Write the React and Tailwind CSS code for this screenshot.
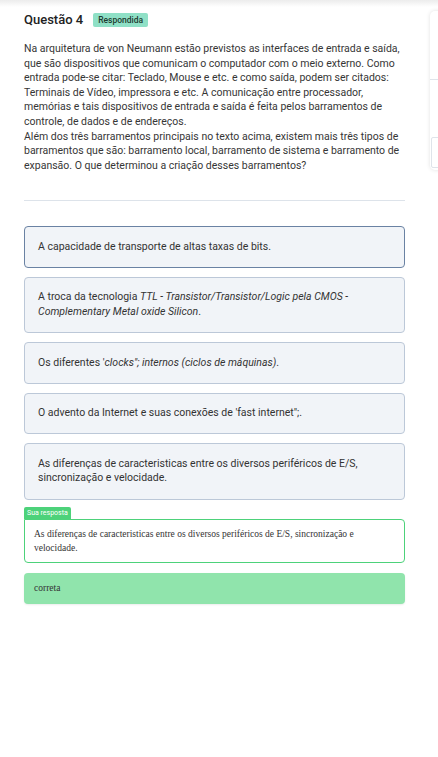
export default function App() {
  const options = [
    { key: 1, content: <>A capacidade de transporte de altas taxas de bits.</>, active: true },
    {
      key: 2,
      content: (
        <>
          A troca da tecnologia <em>TTL - Transistor/Transistor/Logic pela CMOS - Complementary Metal oxide Silicon</em>.
        </>
      ),
    },
    {
      key: 3,
      content: (
        <>
          Os diferentes '<em>clocks"; internos (ciclos de máquinas)</em>.
        </>
      ),
    },
    { key: 4, content: <>O advento da Internet e suas conexões de 'fast internet";.</> },
    {
      key: 5,
      content: <>As diferenças de caracteristicas entre os diversos periféricos de E/S, sincronização e velocidade.</>,
    },
  ];

  return (
    <div className="min-h-[757px] w-[438px] overflow-hidden bg-white font-['Roboto',sans-serif] text-[#333]">
      <div className="h-[7px] bg-gradient-to-b from-[#ececec] to-white" />
      <div className="flex">
        <div className="ml-6 w-[381px] shrink-0">
          <div className="mt-[5px] flex items-center gap-[10px]">
            <h2 className="text-[13px] font-medium leading-[16px] text-[#222]">Questão 4</h2>
            <span className="rounded-[2px] bg-[#8fe0c6] px-[5px] py-[1.5px] text-[8.5px] font-medium leading-[11px] text-[#1d3b30]">
              Respondida
            </span>
          </div>
          <div className="mt-[14px] text-[10.5px] leading-[14.6px] text-[#363636]">
            <p>
              Na arquitetura de von Neumann estão previstos as interfaces de entrada e saída, que são dispositivos que comunicam o computador com o meio externo. Como entrada pode-se citar: Teclado, Mouse e etc. e como saída, podem ser citados: Terminais de Vídeo, impressora e etc. A comunicação entre processador, memórias e tais dispositivos de entrada e saída é feita pelos barramentos de controle, de dados e de endereços.
            </p>
            <p>
              Além dos três barramentos principais no texto acima, existem mais três tipos de barramentos que são: barramento local, barramento de sistema e barramento de expansão. O que determinou a criação desses barramentos?
            </p>
          </div>
          <div className="mt-[27px] h-px bg-[#dde3ea]" />
          <div className="mt-[25px] flex flex-col gap-[9px]">
            {options.map((o) => (
              <div
                key={o.key}
                className={
                  o.active
                    ? "rounded-[4px] border border-[#6a82a3] bg-[#f1f4f8] px-[13px] py-[12.5px] text-[10.5px] leading-[14.6px] text-[#333]"
                    : "rounded-[4px] border border-[#bcc8d8] bg-[#f1f4f8] px-[13px] py-[12.5px] text-[10.5px] leading-[14.6px] text-[#333]"
                }
              >
                {o.content}
              </div>
            ))}
          </div>
          <div className="mt-[7px]">
            <div className="w-fit rounded-t-[2px] bg-[#4dd27a] px-[3px] text-[7px] leading-[12px] text-white">
              Sua resposta
            </div>
            <div className="rounded-b-[4px] rounded-tr-[4px] border border-[#4dd27a] bg-white px-[9px] py-[7px] font-['Liberation_Serif',serif] text-[9.5px] leading-[14px] text-[#333]">
              As diferenças de caracteristicas entre os diversos periféricos de E/S, sincronização e velocidade.
            </div>
          </div>
          <div className="mt-[10px] rounded-[4px] bg-[#90e4ac] px-[10px] py-[8.5px] font-['Liberation_Serif',serif] text-[9.5px] leading-[14px] text-[#333] shadow-[0_1px_2px_rgba(0,0,0,0.08)]">
            correta
          </div>
        </div>
        <div className="ml-[25px] mt-[4px] w-[120px] shrink-0">
          <div className="h-[159px] rounded-[5px] bg-white shadow-[0_0_4px_rgba(0,0,0,0.12)]">
            <div className="h-[69px] border-b border-[#dfe4ea]" />
            <div className="ml-[1px] mt-[57px] h-[31px] rounded-[2px] border border-[#dfe4ea]" />
          </div>
        </div>
      </div>
    </div>
  );
}
